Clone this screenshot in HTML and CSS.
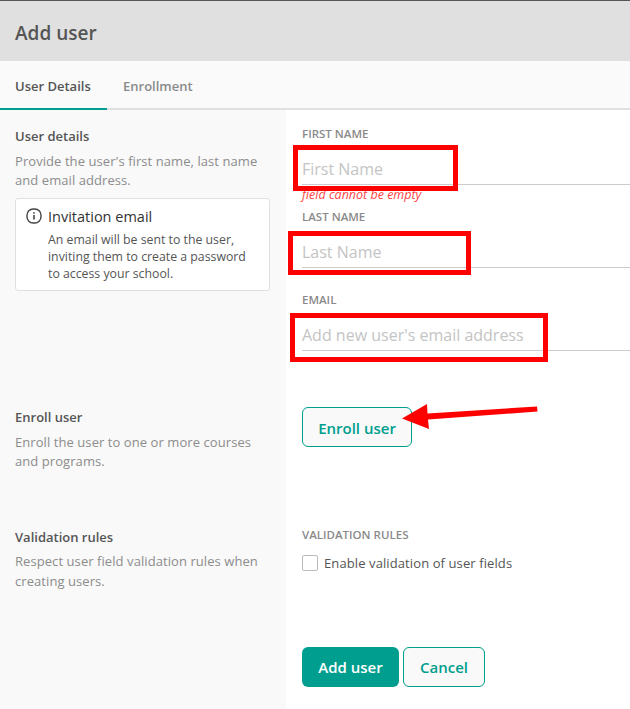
FILE: index.html
```html
<!DOCTYPE html>
<html lang="en">
<head>
<meta charset="utf-8">
<title>Add user</title>
<link rel="stylesheet" href="styles.css">
</head>
<body>
<div class="page">
  <header class="header"><h1>Add user</h1></header>
  <nav class="tabs">
    <a class="tab active">User Details</a>
    <a class="tab">Enrollment</a>
  </nav>
  <main class="grid">
    <section class="side side-details">
      <h2>User details</h2>
      <p>Provide the user's first name, last name and email address.</p>
      <div class="note">
        <svg class="note-icon" width="16" height="16" viewBox="0 0 16 16" fill="none" stroke="#444" stroke-width="1.4"><rect x="1" y="1" width="14" height="14" rx="6.2"/><path d="M8 7v4.4" stroke-width="1.6"/><path d="M8 4.200v1.600" stroke-width="1.6"/></svg>
        <div class="note-body">
          <h3>Invitation email</h3>
          <p>An email will be sent to the user, inviting them to create a password to access your school.</p>
        </div>
      </div>
    </section>
    <section class="form form-details">
      <div class="field">
        <label>FIRST NAME</label>
        <div class="input">First Name</div>
        <span class="error">field cannot be empty</span>
      </div>
      <div class="field">
        <label>LAST NAME</label>
        <div class="input">Last Name</div>
      </div>
      <div class="field">
        <label>EMAIL</label>
        <div class="input">Add new user's email address</div>
      </div>
    </section>

    <section class="side side-enroll">
      <h2>Enroll user</h2>
      <p>Enroll the user to one or more courses and programs.</p>
    </section>
    <section class="form form-enroll">
      <button class="btn btn-outline btn-enroll">Enroll user</button>
    </section>

    <section class="side side-valid">
      <h2>Validation rules</h2>
      <p>Respect user field validation rules when creating users.</p>
    </section>
    <section class="form form-valid">
      <label class="label-valid">VALIDATION RULES</label>
      <div class="check"><span class="box"></span><span>Enable validation of user fields</span></div>
      <div class="actions">
        <button class="btn btn-primary">Add user</button>
        <button class="btn btn-outline btn-cancel">Cancel</button>
      </div>
    </section>
  </main>
  <div class="mark mark-1"></div>
  <div class="mark mark-2"></div>
  <div class="mark mark-3"></div>
  <svg class="arrow" width="150" height="40" viewBox="0 0 150 40"><path d="M12 18.500L37 4 37.500 13.500 147 6.500 147.500 11.500 38 19.500 39 29z" fill="#f00"/></svg>
</div>
</body>
</html>
```
FILE: styles.css
```css
* { box-sizing: border-box; }
html, body { margin: 0; padding: 0; background: #fff; }
body { font-family: "Open Sans", "Liberation Sans", sans-serif; color: #555; }
.page { position: relative; width: 630px; height: 709px; overflow: hidden; }

.header { height: 61px; background: #e0e0e0; border-top: 1px solid #555; padding: 3px 15px 0; display: flex; align-items: center; }
.header h1 { margin: 0; font-size: 19px; font-weight: 600; color: #555; }

.tabs { height: 49px; display: flex; background: #fafafa; border-bottom: 2px solid #e0e0e0; }
.tab { height: 49px; display: flex; align-items: center; font-size: 13px; font-weight: 600; padding: 1px 16px 0 16px; color: #8a8a8a; }
.tab.active { width: 107px; color: #555; border-bottom: 2px solid #009e8e; padding: 3px 0 0 15px; }

.grid { display: grid; grid-template-columns: 286px 1fr; grid-template-rows: 288px 120px 191px; }
.side { background: #f9f9f9; padding: 17px 15px 0; }
.side h2 { margin: 0 0 6px; font-size: 13px; line-height: 19px; font-weight: 600; color: #555; }
.side > p { margin: 0; font-size: 13px; line-height: 19px; letter-spacing: .07px; color: #8c8c8c; width: 250px; }
.side-enroll { padding-top: 10px; }
.side-valid { padding-top: 10px; }
.side-valid h2 { margin-bottom: 4px; }
.side-valid > p { line-height: 20px; }

.note { display: flex; gap: 6px; width: 255px; height: 93px; margin-top: 8px; padding: 8px 10px 0; background: #fff; border: 1px solid #e0e0e0; border-radius: 3px; }
.note-icon { flex: none; margin-top: 1px; }
.note-body { width: 200px; }
.note h3 { margin: 0 0 4px; font-size: 14.500px; line-height: 20px; font-weight: 400; color: #333; }
.note p { margin: 0; font-size: 12.300px; line-height: 17px; color: #555; }

.form { padding-left: 16px; }
.form-details { padding-top: 16px; }
.field { height: 83px; }
.field label { display: block; font-size: 11.500px; line-height: 16px; font-weight: 600; color: #8a8a8a; }
.label-valid { display: block; font-size: 11.500px; line-height: 16px; font-weight: 600; color: #8a8a8a; }
.input { height: 43px; padding-top: 16px; border-bottom: 1px solid #ccc; font-size: 16px; line-height: 22px; color: #c4c4c4; }
.error { display: block; font-size: 12.500px; line-height: 16px; margin-top: 2px; font-style: italic; color: #f44; }

.btn { font-family: inherit; font-size: 15px; font-weight: 600; border-radius: 6px; cursor: pointer; }
.btn-outline { background: #f9f9f9; border: 1px solid #009e8e; color: #009e8e; }
.btn-enroll { display: block; width: 110px; height: 40px; margin-top: 9px; padding: 1px 0 0; }
.form-valid { padding-top: 9px; }
.check { display: flex; align-items: center; gap: 6px; height: 18px; margin-top: 11px; font-size: 13px; letter-spacing: .1px; color: #555; }
.box { width: 16px; height: 16px; background: #fff; border: 1px solid #bbb; border-radius: 2px; }
.actions { display: flex; gap: 4px; margin-top: 75px; }
.btn-primary { width: 97px; height: 40px; background: #009e8e; border: 0; color: #fff; }
.btn-cancel { width: 82px; height: 40px; }

.mark { position: absolute; border: 5px solid #f00; }
.mark-1 { left: 293px; top: 145px; width: 165px; height: 46px; }
.mark-2 { left: 288px; top: 231px; width: 183px; height: 44px; }
.mark-3 { left: 290px; top: 313px; width: 258px; height: 49px; }
.arrow { position: absolute; left: 390px; top: 400px; }
```
